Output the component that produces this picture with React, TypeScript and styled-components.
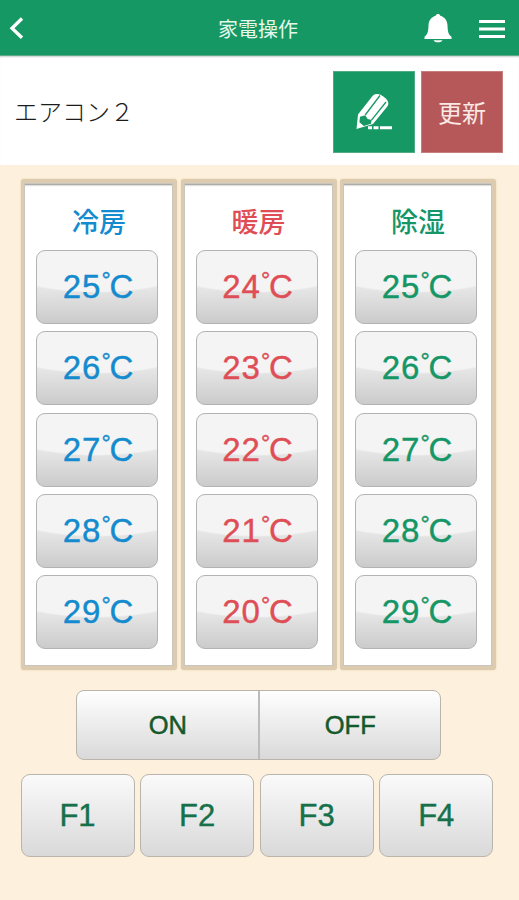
import React from 'react';
import styled, { createGlobalStyle } from 'styled-components';

const GlobalStyle = createGlobalStyle`
  * { box-sizing: border-box; }
  body { margin: 0; background: #fdf0dc; }
  button { margin: 0; padding: 0; font: inherit; color: inherit; cursor: pointer; }
`;

const Screen = styled.div`
  width: 519px;
  height: 900px;
  overflow: hidden;
  background: #fdf0dc;
  font-family: 'Noto Sans CJK JP', sans-serif;
`;

const Header = styled.header`
  display: grid;
  grid-template-columns: 150px 1fr 150px;
  align-items: center;
  height: 56px;
  padding: 0 14px 0 8px;
  background: #169865;
  border-bottom: 1px solid #5fa98a;
  color: #fff;
`;

const Title = styled.h1`
  margin: 0;
  padding: 2px 0 0 3px;
  text-align: center;
  font-size: 20px;
  line-height: 30px;
  font-weight: 400;
  color: #e4f8ec;
`;

const IconButton = styled.button`
  display: flex;
  border: 0;
  background: none;
`;

const HeaderActions = styled.div`
  display: flex;
  justify-content: flex-end;
  align-items: center;
  gap: 27px;
  padding-top: 2px;
`;

const DeviceBar = styled.section`
  display: flex;
  align-items: center;
  gap: 6px;
  height: 109px;
  padding: 3px 16px 0 14px;
  background: #fff;
  box-shadow: inset 0 2px 2px -1px #c4d0ca;
`;

const DeviceName = styled.h2`
  flex: 1;
  margin: 0;
  padding-bottom: 3px;
  font-size: 24px;
  line-height: 32px;
  font-weight: 300;
  color: #1c1c1c;
`;

const SquareButton = styled.button<{ $tone: string; $edge: string }>`
  display: flex;
  align-items: center;
  justify-content: center;
  width: 82px;
  height: 82px;
  border: 1px solid ${(p) => p.$edge};
  background: ${(p) => p.$tone};
  color: #fbe9e6;
  font-size: 24px;
  line-height: 32px;
`;

const Panels = styled.main`
  display: grid;
  grid-template-columns: repeat(3, 156px);
  column-gap: 3.5px;
  padding: 14px 0 0 21px;
`;

const Panel = styled.section<{ $color: string }>`
  height: 491px;
  padding: 22px 15px 0 12px;
  background: #fff;
  border: solid #dccbae;
  border-width: 4px 4px 4px 3px;
  border-radius: 3px;
  box-shadow: inset 0 0 0 1px #c9c5bf, inset 0 3px 2px -1px #8f8c88, 0 0 2px #e5d2ac;
  color: ${(p) => p.$color};
`;

const PanelTitle = styled.h3`
  margin: 0 0 9px;
  padding-left: 4px;
  height: 36px;
  text-align: center;
  font-size: 27px;
  line-height: 32px;
  font-weight: 500;
`;

const ButtonStack = styled.div`
  display: grid;
  grid-template-rows: repeat(5, 74px);
  row-gap: 7.3px;
  justify-content: center;
`;

const TempButton = styled.button`
  display: flex;
  align-items: center;
  justify-content: center;
  width: 122px;
  height: 74px;
  border: 1px solid #b3b3b3;
  border-radius: 9px;
  padding-left: 3px;
  background:
    radial-gradient(ellipse 118px 42px at 50% 0, #f4f4f4 0 96%, transparent 100%),
    linear-gradient(#f3f3f3 0, #e8e8e8 48%, #cbcbcb 100%);
  font-family: 'Liberation Sans', sans-serif;
  font-size: 33px;
  letter-spacing: 1px;
  line-height: 40px;
  -webkit-text-stroke: 0.4px currentColor;
`;

const Degree = styled.span`
  margin-bottom: 14px;
  font-size: 23px;
  letter-spacing: -1.2px;
  line-height: 22px;
`;

const PowerRow = styled.div`
  display: flex;
  width: 365px;
  height: 70px;
  margin: 20px 0 0 76px;
  border: 1px solid #b9b4ac;
  border-radius: 8px;
  overflow: hidden;
  background: linear-gradient(#fff, #d9d9d9);
`;

const PowerButton = styled.button`
  flex: 1;
  padding-left: 1px;
  border: 0;
  background: none;
  font-family: 'Liberation Sans', sans-serif;
  font-size: 25.5px;
  -webkit-text-stroke: 0.5px currentColor;
  color: #14592b;
  & + & { border-left: 2px solid #bcbcbc; }
`;

const FunctionRow = styled.div`
  display: grid;
  grid-template-columns: repeat(4, 114px);
  column-gap: 5.6px;
  margin: 14px 0 0 20.5px;
`;

const FunctionButton = styled.button`
  height: 83px;
  padding-top: 1px;
  border: 1px solid #b9b4ac;
  border-radius: 9px;
  background: linear-gradient(#fafafa, #d9d9d9);
  font-family: 'Liberation Sans', sans-serif;
  font-size: 31px;
  -webkit-text-stroke: 0.4px currentColor;
  color: #16714b;
`;

const modes = [
  { name: '冷房', color: '#148bce', temps: [25, 26, 27, 28, 29] },
  { name: '暖房', color: '#df4e56', temps: [24, 23, 22, 21, 20] },
  { name: '除湿', color: '#159667', temps: [25, 26, 27, 28, 29] },
];

const BackIcon = () => (
  <svg width="16" height="24" viewBox="0 0 16 24">
    <path d="M14 2.500 4 12.300l10 9.500" fill="none" stroke="#fff" strokeWidth="3.300" />
  </svg>
);

const BellIcon = () => (
  <svg width="28" height="29" viewBox="0 0 28 29">
    <path
      fill="#fff"
      d="M14 0c1.200 0 1.900.6 2.300 1.700 4.500 1.400 7 4.700 7.200 9.500.2 5.700.6 9 4 11.500V25H.5v-2.300c3.400-2.500 3.800-5.800 4-11.500.2-4.800 2.700-8.100 7.200-9.500C12.100.6 12.800 0 14 0ZM9.500 26.200h9c-.7 1.600-2.300 2-4.500 2s-3.800-.4-4.500-2Z"
    />
  </svg>
);

const MenuIcon = () => (
  <svg width="26" height="20" viewBox="0 0 26 20">
    <path d="M0 2.500h26M0 10h26M0 17.500h26" stroke="#fff" strokeWidth="2.800" />
  </svg>
);

const PencilIcon = () => (
  <svg width="38" height="38" viewBox="0 0 38 38">
    <path d="M1.500 36 3 21.500 17.500 3q2-2.500 5-2Q29 2 33 8.500q1 2.500-.5 4.800L18 31Z" fill="#fff" />
    <path d="M5 23.800 10.200 22.200l2.500 3.800 4 1-.8 3.800-7 2.300-4.500-3.900Z" fill="#169865" />
    <path d="M10.200 22 25 2.500M16.500 27.200 31 9" stroke="#169865" strokeWidth="1.300" />
    <path d="M13 34.800h4M18.500 34.800h5M25 34.800h12" stroke="#fff" strokeWidth="3" />
  </svg>
);

export default function App() {
  return (
    <>
      <GlobalStyle />
      <Screen>
        <Header>
          <IconButton aria-label="戻る"><BackIcon /></IconButton>
          <Title>家電操作</Title>
          <HeaderActions>
            <IconButton aria-label="通知"><BellIcon /></IconButton>
            <IconButton aria-label="メニュー"><MenuIcon /></IconButton>
          </HeaderActions>
        </Header>
        <DeviceBar>
          <DeviceName>エアコン２</DeviceName>
          <SquareButton $tone="#169865" $edge="#4fab84" aria-label="編集"><PencilIcon /></SquareButton>
          <SquareButton $tone="#b65859" $edge="#c77f7d">更新</SquareButton>
        </DeviceBar>
        <Panels>
          {modes.map((mode) => (
            <Panel key={mode.name} $color={mode.color}>
              <PanelTitle>{mode.name}</PanelTitle>
              <ButtonStack>
                {mode.temps.map((t) => (
                  <TempButton key={t}>{t}<Degree>°</Degree>C</TempButton>
                ))}
              </ButtonStack>
            </Panel>
          ))}
        </Panels>
        <PowerRow>
          <PowerButton>ON</PowerButton>
          <PowerButton>OFF</PowerButton>
        </PowerRow>
        <FunctionRow>
          {['F1', 'F2', 'F3', 'F4'].map((f) => (
            <FunctionButton key={f}>{f}</FunctionButton>
          ))}
        </FunctionRow>
      </Screen>
    </>
  );
}
